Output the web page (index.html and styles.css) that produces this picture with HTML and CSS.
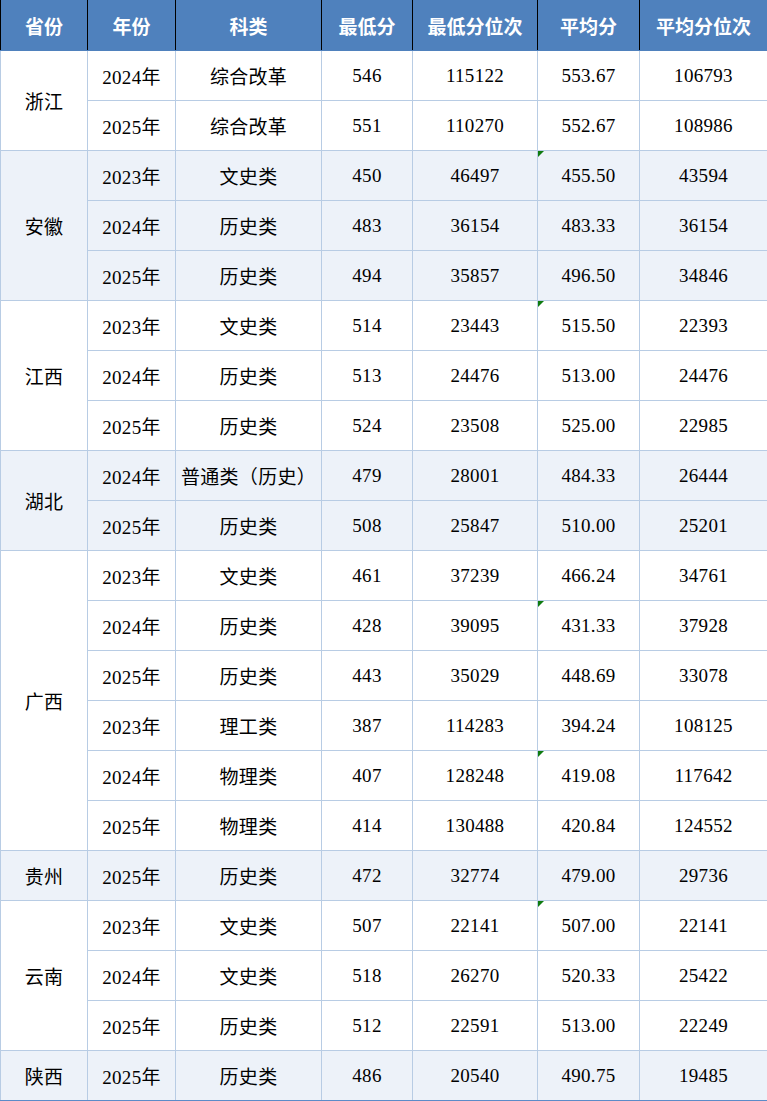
FILE: index.html
```html
<!DOCTYPE html>
<html lang="zh-CN">
<head>
<meta charset="utf-8">
<link rel="stylesheet" href="styles.css">
</head>
<body>
<table class="score">
<colgroup>
<col class="c1"><col class="c2"><col class="c3"><col class="c4"><col class="c5"><col class="c6"><col class="c7">
</colgroup>
<thead>
<tr><th>省份</th><th>年份</th><th>科类</th><th>最低分</th><th>最低分位次</th><th>平均分</th><th>平均分位次</th></tr>
</thead>
<tbody>
<tr class="w"><td rowspan="2">浙江</td><td>2024年</td><td>综合改革</td><td>546</td><td>115122</td><td>553.67</td><td>106793</td></tr>
<tr class="w"><td>2025年</td><td>综合改革</td><td>551</td><td>110270</td><td>552.67</td><td>108986</td></tr>

<tr class="b"><td rowspan="3">安徽</td><td>2023年</td><td>文史类</td><td>450</td><td>46497</td><td class="flag">455.50</td><td>43594</td></tr>
<tr class="b"><td>2024年</td><td>历史类</td><td>483</td><td>36154</td><td>483.33</td><td>36154</td></tr>
<tr class="b"><td>2025年</td><td>历史类</td><td>494</td><td>35857</td><td>496.50</td><td>34846</td></tr>

<tr class="w"><td rowspan="3">江西</td><td>2023年</td><td>文史类</td><td>514</td><td>23443</td><td class="flag">515.50</td><td>22393</td></tr>
<tr class="w"><td>2024年</td><td>历史类</td><td>513</td><td>24476</td><td>513.00</td><td>24476</td></tr>
<tr class="w"><td>2025年</td><td>历史类</td><td>524</td><td>23508</td><td>525.00</td><td>22985</td></tr>

<tr class="b"><td rowspan="2">湖北</td><td>2024年</td><td>普通类（历史）</td><td>479</td><td>28001</td><td>484.33</td><td>26444</td></tr>
<tr class="b"><td>2025年</td><td>历史类</td><td>508</td><td>25847</td><td>510.00</td><td>25201</td></tr>

<tr class="w"><td rowspan="6">广西</td><td>2023年</td><td>文史类</td><td>461</td><td>37239</td><td>466.24</td><td>34761</td></tr>
<tr class="w"><td>2024年</td><td>历史类</td><td>428</td><td>39095</td><td class="flag">431.33</td><td>37928</td></tr>
<tr class="w"><td>2025年</td><td>历史类</td><td>443</td><td>35029</td><td>448.69</td><td>33078</td></tr>
<tr class="w"><td>2023年</td><td>理工类</td><td>387</td><td>114283</td><td>394.24</td><td>108125</td></tr>
<tr class="w"><td>2024年</td><td>物理类</td><td>407</td><td>128248</td><td class="flag">419.08</td><td>117642</td></tr>
<tr class="w"><td>2025年</td><td>物理类</td><td>414</td><td>130488</td><td>420.84</td><td>124552</td></tr>

<tr class="b"><td>贵州</td><td>2025年</td><td>历史类</td><td>472</td><td>32774</td><td>479.00</td><td>29736</td></tr>

<tr class="w"><td rowspan="3">云南</td><td>2023年</td><td>文史类</td><td>507</td><td>22141</td><td class="flag">507.00</td><td>22141</td></tr>
<tr class="w"><td>2024年</td><td>文史类</td><td>518</td><td>26270</td><td>520.33</td><td>25422</td></tr>
<tr class="w"><td>2025年</td><td>历史类</td><td>512</td><td>22591</td><td>513.00</td><td>22249</td></tr>

<tr class="b last"><td>陕西</td><td>2025年</td><td>历史类</td><td>486</td><td>20540</td><td>490.75</td><td>19485</td></tr>
</tbody>
</table>
</body>
</html>
```
FILE: styles.css
```css
html, body {
  margin: 0;
  padding: 0;
  background: #ffffff;
}

.score {
  border-collapse: collapse;
  table-layout: fixed;
  width: 767px;
  font-family: "Liberation Serif", "Noto Sans CJK SC", serif;
  font-size: 19px;
  color: #000000;
}

.c1 { width: 87px; }
.c2 { width: 88px; }
.c3 { width: 146px; }
.c4 { width: 91px; }
.c5 { width: 125px; }
.c6 { width: 102px; }
.c7 { width: 128px; }

.score th {
  height: 50px;
  padding: 0;
  background: #4f81bd;
  color: #ffffff;
  font-family: "Noto Sans CJK SC", sans-serif;
  font-weight: 700;
  font-size: 19px;
  text-align: center;
  vertical-align: middle;
  border-left: 1px solid #000000;
  border-right: 1px solid #000000;
  border-top: 0;
  border-bottom: 1px solid #4f81bd;
}

.score td {
  height: 49px;
  padding: 0;
  text-align: center;
  vertical-align: middle;
  border: 1px solid #b8cce4;
  white-space: nowrap;
  letter-spacing: 0.3px;
}

.score tr.b td {
  background: #edf2f9;
}

.score td:last-child {
  border-right-color: #5b8bc8;
}

.score tr.last td {
  border-bottom-color: #5b8bc8;
}

.flag {
  position: relative;
}

.flag::before {
  content: "";
  position: absolute;
  left: 0;
  top: 0;
  width: 0;
  height: 0;
  border-top: 6px solid #0f7b0f;
  border-right: 6px solid transparent;
}
```
